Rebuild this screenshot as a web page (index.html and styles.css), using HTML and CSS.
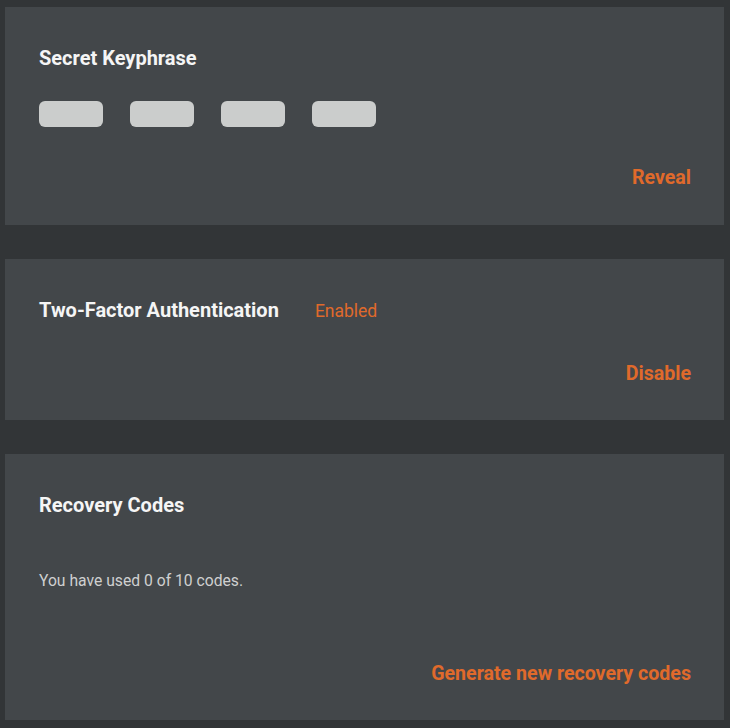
FILE: index.html
```html
<!DOCTYPE html>
<html>
<head>
<meta charset="utf-8">
<link rel="stylesheet" href="styles.css">
</head>
<body>
<div class="page">
  <section class="card card-keyphrase">
    <h2 class="title">Secret Keyphrase</h2>
    <div class="pills">
      <span class="pill"></span><span class="pill"></span><span class="pill"></span><span class="pill"></span>
    </div>
    <div class="actions"><a class="action">Reveal</a></div>
  </section>
  <section class="card card-2fa">
    <div class="title-row">
      <h2 class="title">Two-Factor Authentication</h2>
      <span class="status">Enabled</span>
    </div>
    <div class="actions"><a class="action">Disable</a></div>
  </section>
  <section class="card card-recovery">
    <h2 class="title">Recovery Codes</h2>
    <p class="desc">You have used 0 of 10 codes.</p>
    <div class="actions"><a class="action">Generate new recovery codes</a></div>
  </section>
</div>
</body>
</html>
```
FILE: styles.css
```css
html, body {
  margin: 0;
  padding: 0;
  background: #323537;
}
body {
  font-family: Roboto, "Liberation Sans", sans-serif;
  color: #f4f4f4;
}
.page {
  padding: 7px 6px 8px 5px;
  display: flex;
  flex-direction: column;
  gap: 34px;
}
.card {
  background: #43474a;
  padding: 0 33px 0 34px;
  display: flex;
  flex-direction: column;
  box-sizing: border-box;
}
.title {
  margin: 0;
  font-size: 20px;
  font-weight: 700;
  line-height: 24px;
  color: #f5f5f5;
}
.card-keyphrase { height: 218px; padding-top: 39px; }
.pills {
  display: flex;
  gap: 27px;
  margin-top: 31px;
}
.pill {
  width: 64px;
  height: 26px;
  border-radius: 6px;
  background: #cbcdcc;
}
.actions {
  display: flex;
  justify-content: flex-end;
}
.action {
  color: #e06a2b;
  font-weight: 700;
  font-size: 19.6px;
  line-height: 24px;
}
.card-keyphrase .actions { margin-top: 39px; }

.card-2fa { height: 161px; padding-top: 38px; }
.title-row {
  display: flex;
  align-items: center;
  gap: 36px;
}
.status {
  color: #e06a2b;
  font-size: 17.5px;
  line-height: 24px;
  padding-top: 2px;
}
.card-2fa .actions { margin-top: 39px; }

.card-recovery { height: 266px; padding-top: 39px; }
.desc {
  margin: 52px 0 0;
  font-size: 15.7px;
  line-height: 24px;
  color: #cfd0d0;
}
.card-recovery .actions { margin-top: 69px; }
```
